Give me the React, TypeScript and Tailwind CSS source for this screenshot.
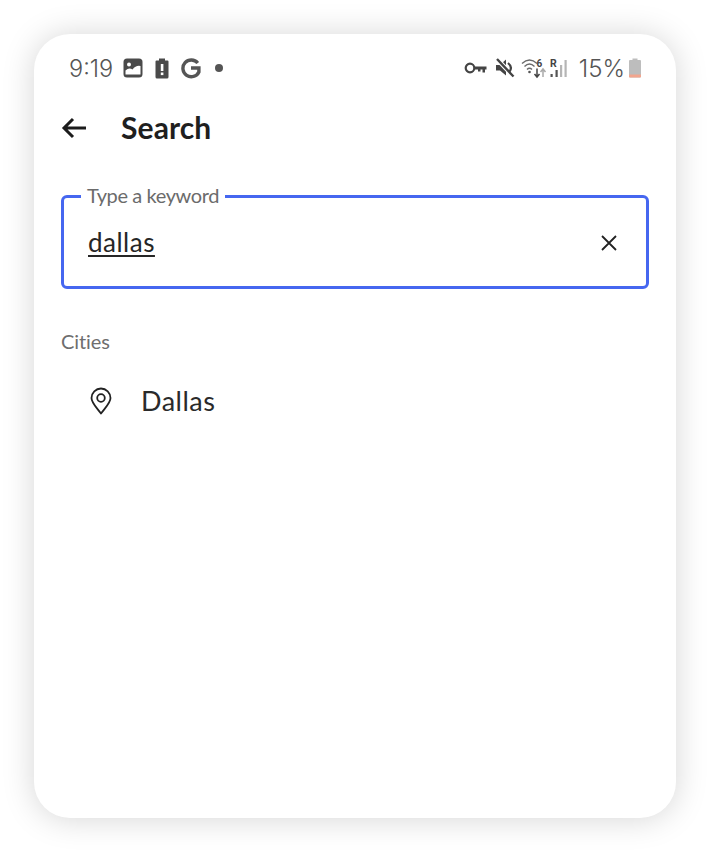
export default function App() {
  return (
    <div className="w-[710px] h-[852px] bg-white p-[34px] overflow-hidden" style={{ fontFamily: 'Lato, "Noto Sans", sans-serif' }}>
      <div className="w-[642px] h-[784px] bg-white rounded-[36px] shadow-[0_1px_32px_rgba(0,0,0,0.17)] flex flex-col px-[27px]">
        {/* status bar */}
        <div className="h-[44px] mt-[12px] flex items-center justify-between text-[#555555]">
          <div className="flex items-center ml-[8px]">
            <span className="text-[23.500px] leading-none w-[54px] mt-[1px]" style={{ fontFamily: 'Inter, sans-serif', fontWeight: 300 }}>9:19</span>
            <svg width="20" height="20" viewBox="0 0 20 20" className="mr-[11px]">
              <rect x="0.5" y="0.5" width="19" height="19" rx="3.500" fill="#4a4a4a" />
              <circle cx="6" cy="6.500" r="2" fill="#fff" />
              <path d="M2.500 16.500 L2.500 12.500 Q6 9 9.500 11.500 Q13 7 17.500 8 L17.500 16.500 Z" fill="#fff" />
            </svg>
            <svg width="16" height="21" viewBox="0 0 16 21" className="mr-[10px]">
              <path d="M5 0.5h6v2h2.500a1 1 0 0 1 1 1v15.500a1.500 1.500 0 0 1-1.500 1.500H3a1.500 1.500 0 0 1-1.500-1.500V3.500a1 1 0 0 1 1-1H5z" fill="#4a4a4a" />
              <rect x="6.800" y="6" width="2.600" height="7" fill="#fff" />
              <rect x="6.800" y="14.500" width="2.600" height="2.600" fill="#fff" />
            </svg>
            <svg width="21" height="21" viewBox="0 0 21 21" className="mr-[14px]">
              <path d="M17.800 5A8.400 8.400 0 1 0 18.900 14 L18.900 10 H11" fill="none" stroke="#555" strokeWidth="3.400" />
            </svg>
            <span className="w-[8px] h-[8px] rounded-full bg-[#555]" />
          </div>
          <div className="flex items-center mr-[7px]">
            <svg width="23" height="14" viewBox="0 0 23 14" className="mr-[8px]">
              <circle cx="6" cy="7" r="4.300" fill="none" stroke="#444" strokeWidth="2.200" />
              <path d="M10 5.500H22.500V8.500H21V11.500H18.500V8.500H16.500V10.500H14V8.500H10Z" fill="#444" />
            </svg>
            <svg width="20" height="20" viewBox="0 0 20 20" className="mr-[6px]">
              <path d="M1 7h4L11 1.500v16L5 12.500H1z" fill="#444" />
              <path d="M1.500 0.500L19 19" stroke="#fff" strokeWidth="4.500" />
              <path d="M2 1L18.500 18.500" stroke="#444" strokeWidth="2.400" />
              <path d="M13 5q5 4 1.500 8.500" fill="none" stroke="#444" strokeWidth="2.200" />
            </svg>
            <svg width="26" height="22" viewBox="0 0 26 22" className="mr-[2px]">
              <path d="M1 6.500Q8.500 -0.500 16 6.500M3.500 9.500Q8.500 4.500 13.500 9.500M6 12.500Q8.500 10 11 12.500" fill="none" stroke="#6a6a6a" strokeWidth="1.400" />
              <circle cx="8.500" cy="15" r="1.300" fill="#555" />
              <text x="15.500" y="9.500" fontSize="10" fontWeight="700" fill="#444" fontFamily="Roboto, sans-serif">6</text>
              <path d="M16 11.500v8M13.500 17L16 20l2.500-3" fill="none" stroke="#444" strokeWidth="1.500" />
              <path d="M22 20v-8M19.500 15L22 12l2.500 3" fill="none" stroke="#aaa" strokeWidth="1.500" />
            </svg>
            <svg width="21" height="22" viewBox="0 0 21 22" className="mr-[9px]">
              <text x="1" y="9.500" fontSize="10.500" fontWeight="700" fill="#444" fontFamily="Roboto, sans-serif">R</text>
              <rect x="1.500" y="17" width="2.200" height="3" fill="#555" />
              <rect x="6.500" y="13" width="2.200" height="7" fill="#555" />
              <rect x="11" y="8" width="2.200" height="12" fill="#b5b5b5" />
              <rect x="15.500" y="3" width="2.200" height="17" fill="#b5b5b5" />
            </svg>
            <span className="text-[24px] leading-none mr-[3px] mt-[1px]" style={{ fontFamily: 'Inter, sans-serif', fontWeight: 300 }}>15%</span>
            <svg width="14" height="20" viewBox="0 0 14 20">
              <path d="M4.500 0.500h5v1.500h2.500a1 1 0 0 1 1 1v15.500a1 1 0 0 1-1 1H2a1 1 0 0 1-1-1V3a1 1 0 0 1 1-1h2.500z" fill="#bdbdbd" />
              <path d="M1 16.500h12v2a1 1 0 0 1-1 1H2a1 1 0 0 1-1-1z" fill="#f2a58e" />
            </svg>
          </div>
        </div>
        {/* header */}
        <div className="flex items-center h-[40px] mt-[17px]">
          <svg width="26" height="24" viewBox="0 0 26 24" className="mr-[34px] mt-[1px]" fill="none" stroke="#1c1c1c" strokeWidth="3">
            <path d="M25 12H3M12 3l-9 9 9 9" />
          </svg>
          <span className="text-[30px] font-bold text-[#1f1f1f] leading-none tracking-[0.1px]">Search</span>
        </div>
        {/* input */}
        <div className="relative mt-[48px] h-[94px] rounded-[6px] border-[3px] border-[#4667f0] flex items-center justify-between pl-[24px] pr-[29px]">
          <span className="absolute left-[17px] top-[-15px] bg-white px-[6px] text-[20px] leading-[24px] text-[#6b6b6b] tracking-[-0.4px]">Type a keyword</span>
          <span className="text-[26px] leading-none text-[#262626] tracking-[0.5px] underline underline-offset-[3px] decoration-[1.500px] mt-[-1px]">dallas</span>
          <svg width="16" height="16" viewBox="0 0 16 16" fill="none" stroke="#222" strokeWidth="1.800" className="mt-[1px]">
            <path d="M1 1l14 14M15 1L1 15" />
          </svg>
        </div>
        {/* results */}
        <div className="mt-[40px] text-[20px] leading-[24px] text-[#6e6e6e] tracking-[-0.1px]">Cities</div>
        <div className="flex items-center mt-[32px] pl-[28px]">
          <svg width="24" height="28" viewBox="0 0 24 28" fill="none" stroke="#222" strokeWidth="1.800" className="mr-[28px]">
            <path d="M12 26.500C8 21 2.500 16 2.500 11a9.500 9.500 0 0 1 19 0C21.500 16 16 21 12 26.500Z" strokeLinejoin="round" />
            <circle cx="12" cy="11" r="3.800" />
          </svg>
          <span className="text-[27px] leading-[32px] text-[#2a2a2a] tracking-[0.5px]">Dallas</span>
        </div>
      </div>
    </div>
  );
}
